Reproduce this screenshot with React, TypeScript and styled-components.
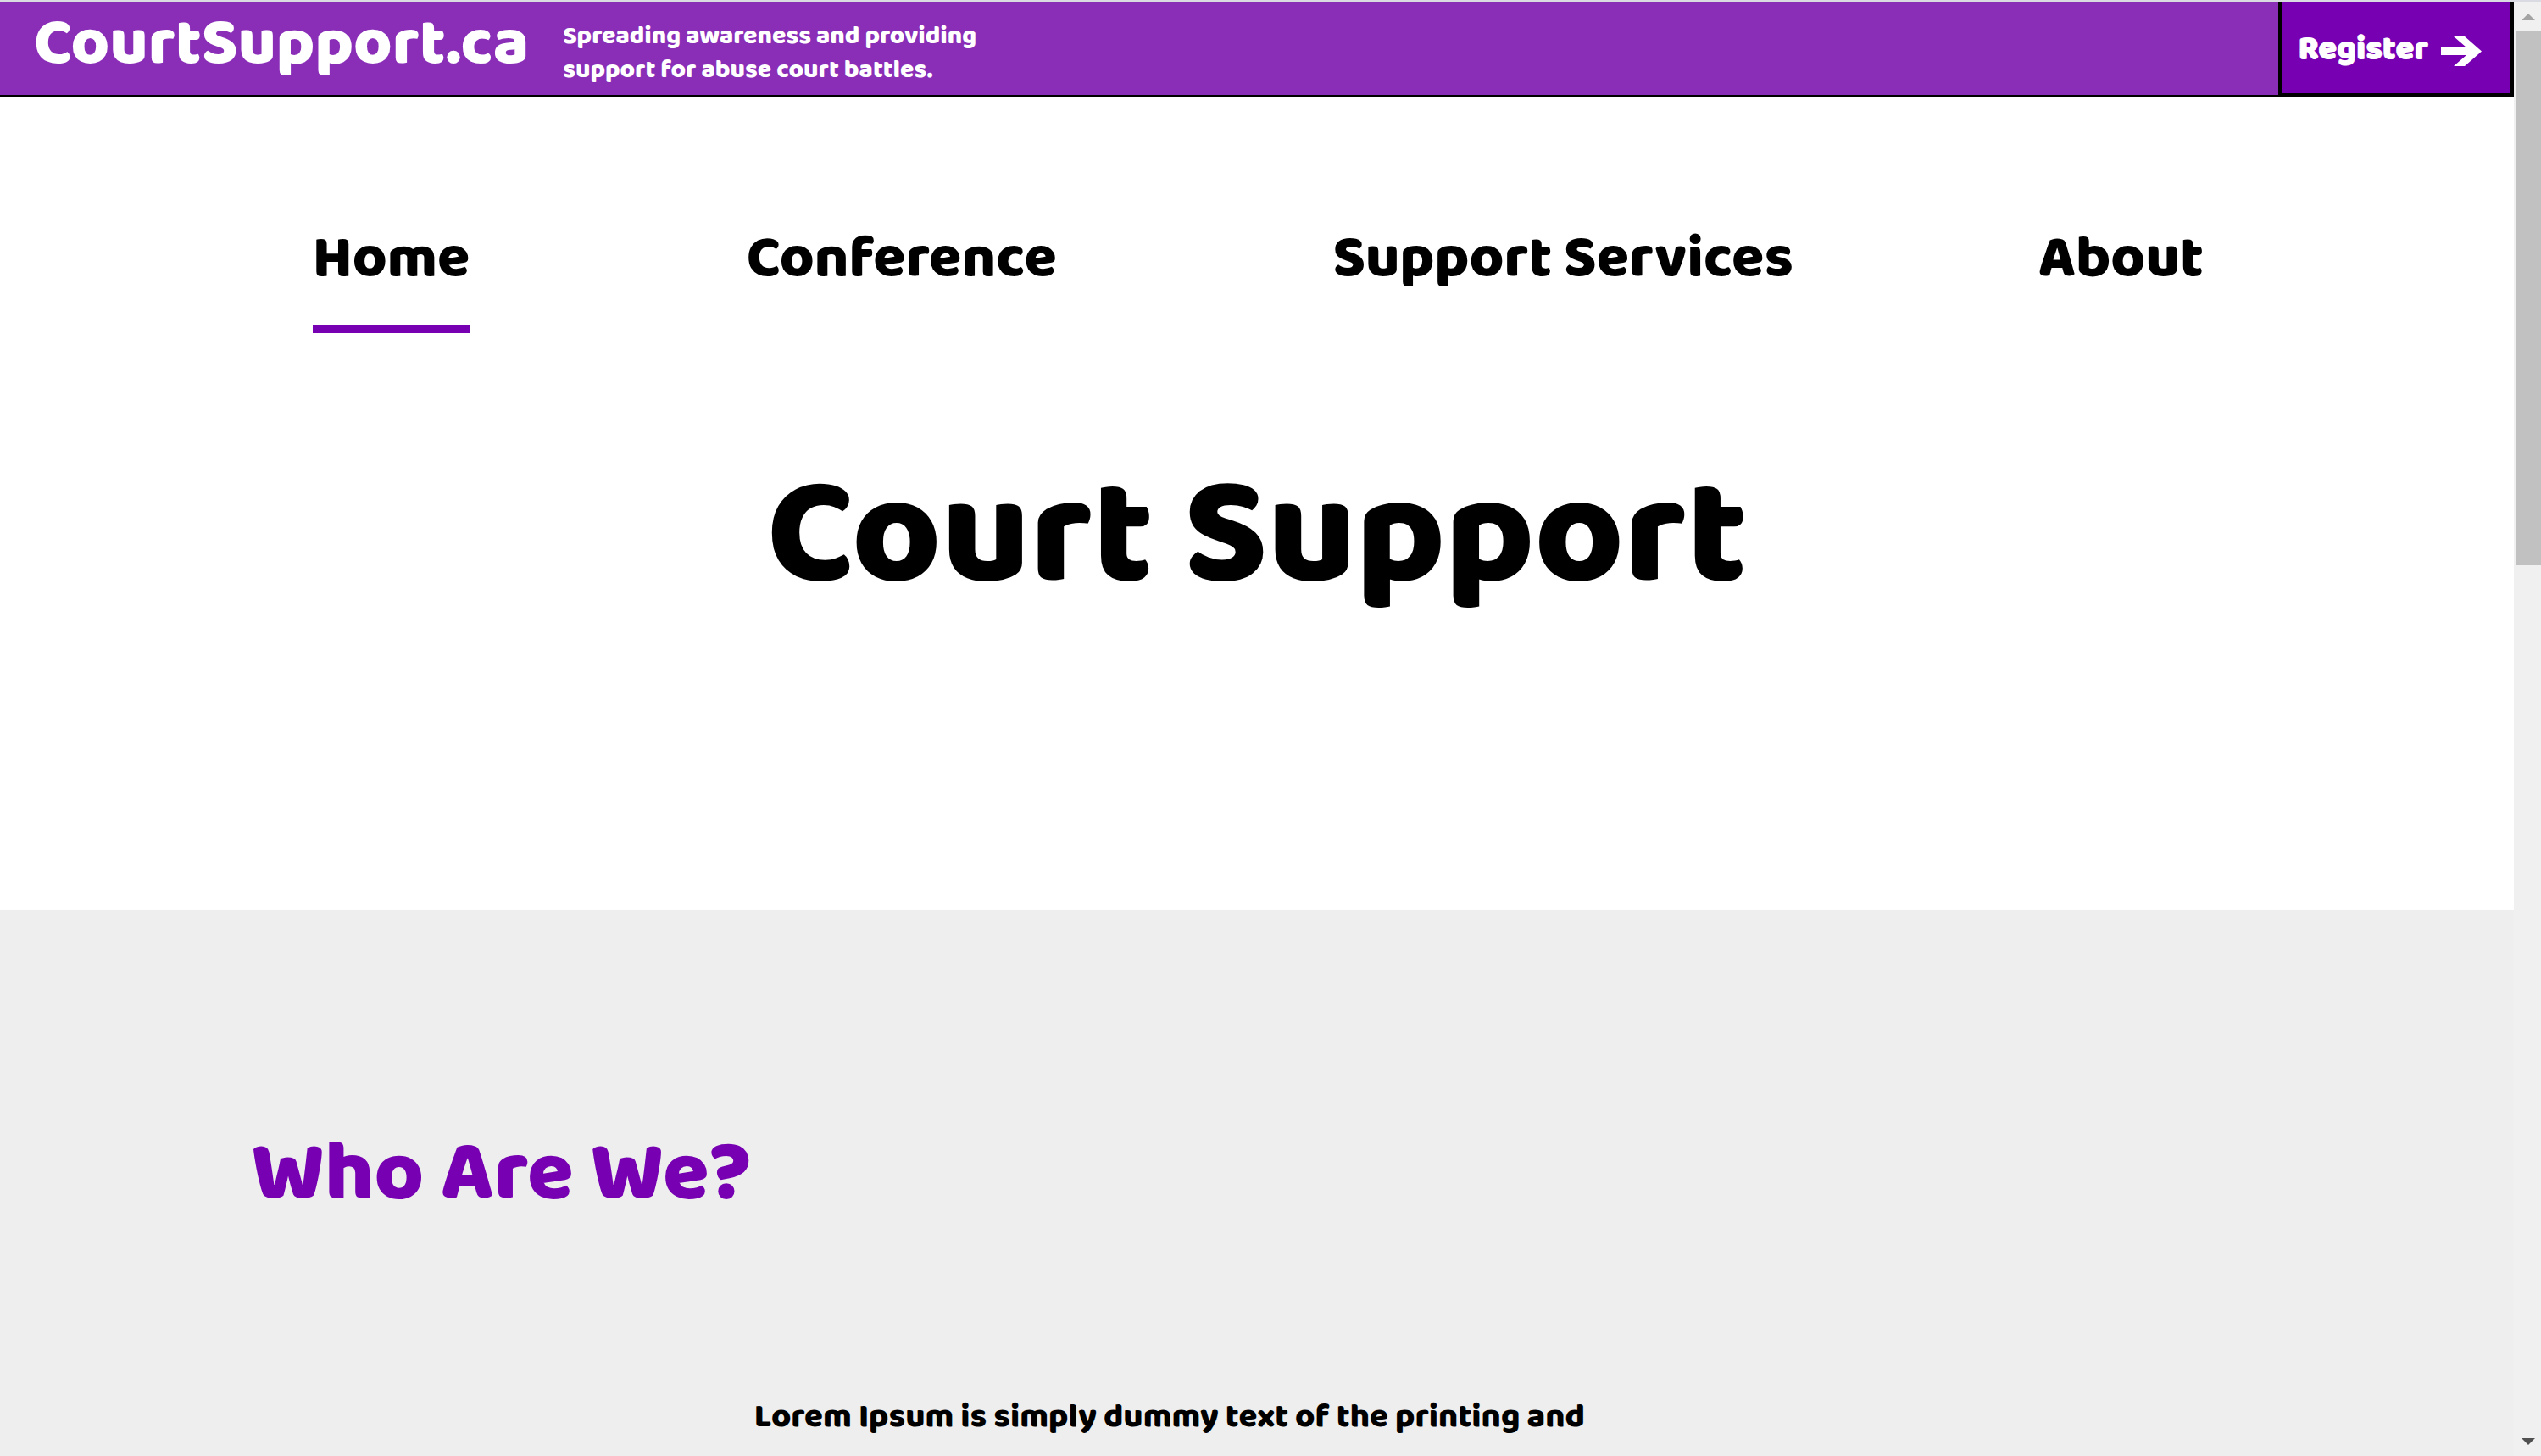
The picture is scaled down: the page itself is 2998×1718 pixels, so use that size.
import React from 'react';
import styled, { createGlobalStyle } from 'styled-components';

const color = {
  header: '#8a2eb8',
  accent: '#7700b3',
  section: '#eeeeee',
  track: '#f0f0f0',
  thumb: '#c1c1c1',
};

const GlobalStyle = createGlobalStyle`
  *, *::before, *::after { box-sizing: border-box; }
  html, body { margin: 0; overflow: hidden; }
  body {
    background: #fff;
    color: #000;
    font-family: "Baloo 2", "Noto Sans", sans-serif;
    font-weight: 800;
  }
`;

const Shell = styled.div`
  display: flex;
  height: 100vh;
  border-top: 2px solid #dadae2;
`;

const Page = styled.div`
  flex: 1;
  min-width: 0;
  display: flex;
  flex-direction: column;
  overflow: hidden;
`;

const Header = styled.header`
  display: flex;
  flex: none;
`;

const Banner = styled.div`
  flex: 1;
  display: flex;
  align-items: flex-start;
  gap: 40px;
  height: 112px;
  padding-left: 40px;
  background: ${color.header};
  border-bottom: 2px solid #000;
  color: #fff;
`;

const Brand = styled.a`
  color: inherit;
  font-size: 78px;
  line-height: 102px;
  text-decoration: none;
`;

const Tagline = styled.p`
  max-width: 520px;
  margin: 0;
  padding-top: 21px;
  font-size: 30px;
  line-height: 40px;
`;

const RegisterButton = styled.button`
  display: flex;
  align-items: center;
  gap: 15px;
  padding: 4px 34px 0 20px;
  background: ${color.accent};
  border: 4px solid #000;
  border-top: 0;
  color: #fff;
  font: inherit;
  font-size: 40px;
  line-height: 48px;
  -webkit-text-stroke: 1px #fff;
  cursor: pointer;
`;

const Arrow = styled.svg`
  width: 48px;
  height: 40px;
  fill: currentColor;
`;

const Hero = styled.section`
  flex: none;
  padding-bottom: 331px;
`;

const Nav = styled.nav`
  display: grid;
  grid-template-columns: 567fr 637fr 923fr 393fr;
  justify-items: center;
  padding: 145px 9% 0 6%;
`;

const NavLink = styled.a<{ $active?: boolean }>`
  padding-bottom: 30px;
  border-bottom: 10px solid ${p => (p.$active ? color.accent : 'transparent')};
  color: inherit;
  font-size: 70px;
  line-height: 94px;
  text-decoration: none;
  white-space: nowrap;
`;

const Title = styled.h1`
  margin: 130px 0 0;
  font-size: 180px;
  font-weight: 800;
  line-height: 220px;
  text-align: center;
`;

const About = styled.section`
  flex: 1 0 auto;
  padding: 246px 10% 0;
  background: ${color.section};
`;

const Heading = styled.h2`
  margin: 0;
  color: ${color.accent};
  font-size: 100px;
  font-weight: 800;
  line-height: 130px;
`;

const Copy = styled.p`
  width: 50%;
  margin: 186px auto 0;
  font-size: 40px;
  line-height: 72px;
`;

const ScrollTrack = styled.div`
  flex: none;
  display: flex;
  flex-direction: column;
  width: 32px;
  background: ${color.track};
`;

const ScrollArrow = styled.svg`
  flex: none;
  width: 32px;
  height: 34px;
  padding-left: 2px;
`;

const ScrollLane = styled.div`
  flex: 1;
  padding-left: 2px;
`;

const ScrollThumb = styled.div`
  height: 38.3%;
  background: ${color.thumb};
`;

const links = [
  { label: 'Home', href: '#home', active: true },
  { label: 'Conference', href: '#conference' },
  { label: 'Support Services', href: '#services' },
  { label: 'About', href: '#about' },
];

export default function App() {
  return (
    <Shell>
      <GlobalStyle />
      <Page>
        <Header>
          <Banner>
            <Brand href="#home">CourtSupport.ca</Brand>
            <Tagline>Spreading awareness and providing support for abuse court battles.</Tagline>
          </Banner>
          <RegisterButton type="button">
            Register
            <Arrow viewBox="0 0 48 40" aria-hidden="true">
              <path d="M0 18H30L15 5H28L48 22.5L28 40H15L30 27H0Z" />
            </Arrow>
          </RegisterButton>
        </Header>
        <Hero>
          <Nav>
            {links.map(link => (
              <NavLink key={link.label} href={link.href} $active={link.active}>
                {link.label}
              </NavLink>
            ))}
          </Nav>
          <Title>Court Support</Title>
        </Hero>
        <About>
          <Heading>Who Are We?</Heading>
          <Copy>Lorem Ipsum is simply dummy text of the printing and</Copy>
        </About>
      </Page>
      <ScrollTrack aria-hidden="true">
        <ScrollArrow viewBox="0 0 30 34">
          <path d="M7 22L15 14L23 22Z" fill="#a3a3a3" />
        </ScrollArrow>
        <ScrollLane>
          <ScrollThumb />
        </ScrollLane>
        <ScrollArrow viewBox="0 0 30 34">
          <path d="M7 13H23L15 21Z" fill="#505050" />
        </ScrollArrow>
      </ScrollTrack>
    </Shell>
  );
}
